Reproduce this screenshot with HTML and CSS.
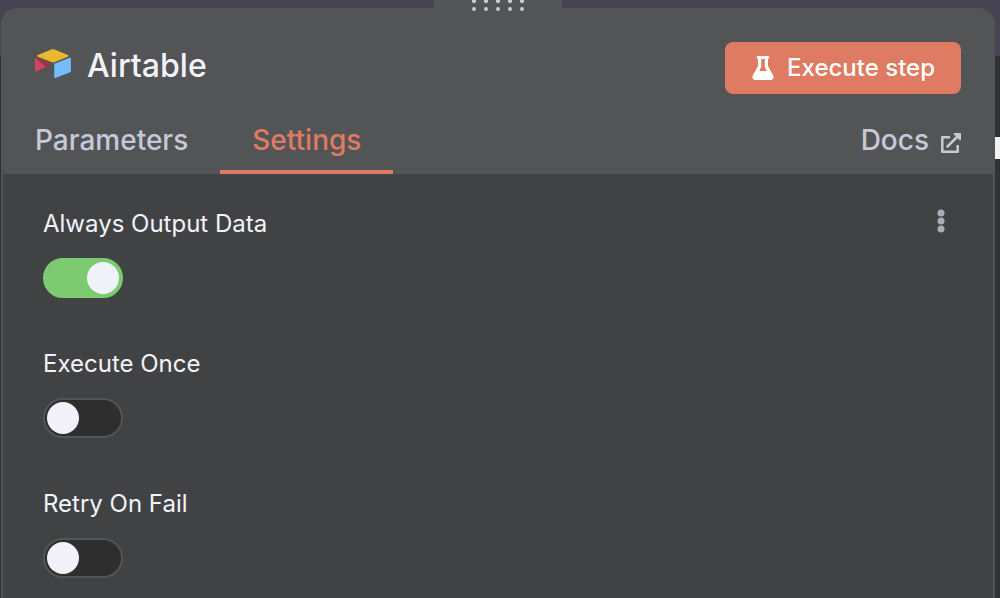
FILE: index.html
```html
<!DOCTYPE html>
<html lang="en">
<head>
    <meta charset="UTF-8">
    <meta name="viewport" content="width=device-width, initial-scale=1.0">
    <title>Airtable</title>
    <link rel="stylesheet" href="styles.css">
</head>
<body>
    <div class="canvas-edge"></div>
    <main class="panel">
        <!-- Drag handle on top of the panel -->
        <div class="drag-handle">
            <svg width="54" height="12" viewBox="0 0 54 12" fill="#c8cad8" aria-hidden="true">
                <path d="M1 0h4v2l-1 1H2L1 2zM13 0h4v2l-1 1h-2l-1-1zM25 0h4v2l-1 1h-2l-1-1zM37 0h4v2l-1 1h-2l-1-1zM49 0h4v2l-1 1h-2l-1-1z"/>
                <circle cx="3" cy="9" r="2"/>
                <circle cx="15" cy="9" r="2"/>
                <circle cx="27" cy="9" r="2"/>
                <circle cx="39" cy="9" r="2"/>
                <circle cx="51" cy="9" r="2"/>
            </svg>
        </div>

        <header class="header">
            <div class="title-row">
                <svg class="logo" width="36" height="30" viewBox="0 0 36 30" aria-hidden="true">
                    <path fill="#e9b82f" d="M16.2.6 2.8 6.1c-.8.3-.8 1.3 0 1.6l13.5 5.3c1.1.5 2.4.5 3.6 0l13-5.3c.8-.3.8-1.3 0-1.6L19.7.6c-1.1-.5-2.4-.5-3.5 0z"/>
                    <path fill="#74bcfb" d="M19.2 15.3v12.8c0 .7.6 1.1 1.2.8l14.9-5.7c.4-.2.6-.5.6-.8V9.5c0-.6-.6-1-1.2-.8l-14.9 5.8c-.4.1-.6.4-.6.8z"/>
                    <path fill="#d04461" d="m15.7 15.7-4.9 2.4L1.3 22.600c-.6.3-1.3-.1-1.3-.8V9.600c0-.3.1-.5.3-.6.3-.3.7-.3 1.1-.2l14.2 5.7c.7.3.8.9.1 1.2z"/>
                    <path fill="#9c3245" d="m15.7 15.7-4.9 2.4L.3 9c.3-.3.7-.3 1.1-.2l14.2 5.7c.7.3.8.9.1 1.2z"/>
                </svg>
                <h1>Airtable</h1>
                <button type="button" class="execute">
                    <svg width="24" height="24" viewBox="0 0 24 24" fill="none" aria-hidden="true">
                        <path fill="#fff" fill-rule="evenodd" d="M7 0h10c1.600 0 1.600 3 0 3v7l5.200 9.400C23.300 21.500 22 24 19.600 24H4.400C2 24 .7 21.500 1.800 19.400L7 10V3c-1.600 0-1.600-3 0-3zM10.200 3v8L8.200 15h7.600l-2-4V3z"/>
                    </svg>
                    <span>Execute step</span>
                </button>
            </div>

            <nav class="tabs">
                <a href="#parameters" class="tab">Parameters</a>
                <a href="#settings" class="tab active">Settings</a>
                <a href="#docs" class="tab docs">
                    Docs
                    <svg width="20" height="20" viewBox="0 0 20 20" fill="none" stroke="#c5c9d8" aria-hidden="true">
                        <path stroke-width="2.5" stroke-linejoin="round" d="M9 4.2H1.3v14.500h15.400V12"/>
                        <path stroke-width="2.5" stroke-linecap="round" d="M6.5 13.500 16 4"/>
                        <path fill="#c5c9d8" stroke="none" d="M13 0h6.500c.3 0 .5.2.5.5V7l-1 .5L12.500 1z"/>
                    </svg>
                </a>
            </nav>
        </header>

        <form class="settings">
            <button type="button" class="more" aria-label="More options">
                <svg width="8" height="24" viewBox="0 0 8 24" fill="#aaadb9" aria-hidden="true">
                    <circle cx="4" cy="4" r="3.5"/>
                    <circle cx="4" cy="12" r="3.5"/>
                    <circle cx="4" cy="20" r="3.5"/>
                </svg>
            </button>
            <div class="field">
                <label for="always-output">Always Output Data</label>
                <input type="checkbox" class="switch" id="always-output" checked>
            </div>
            <div class="field">
                <label for="execute-once">Execute Once</label>
                <input type="checkbox" class="switch" id="execute-once">
            </div>
            <div class="field">
                <label for="retry">Retry On Fail</label>
                <input type="checkbox" class="switch" id="retry">
            </div>
        </form>
    </main>
</body>
</html>
```
FILE: styles.css
```css
* {
    box-sizing: border-box;
}
html {
    height: 100%;
}
body {
    display: flex;
    min-height: 100%;
    margin: 0;
    padding: 8px 5px 0 1px;
    background: linear-gradient(#464452 56px, #303133 56px);
    color: #f2f3fa;
    font-family: Inter, "Liberation Sans", sans-serif;
    font-size: 24px;
}
.canvas-edge {
    position: absolute;
    top: 137px;
    right: 0;
    width: 5px;
    height: 22px;
    background-color: #f3f3f3;
}
.panel {
    position: relative;
    flex: 1;
    background-color: #414244;
    border: 2px solid #535456;
    border-width: 0 2px;
    border-radius: 16px 16px 0 0;
}
.drag-handle {
    position: absolute;
    top: -8px;
    left: 50%;
    display: flex;
    justify-content: center;
    width: 128px;
    height: 16px;
    margin-left: -64px;
    background-color: #535456;
}
.header {
    padding: 34px 32px 0;
    background-color: #535456;
    border-radius: 14px 14px 0 0;
}
.title-row {
    display: flex;
    align-items: center;
}
.logo {
    margin: 0 16px 8px 0;
}
h1 {
    flex: 1;
    margin: 0 0 4px;
    font-size: 32px;
    font-weight: 500;
    line-height: 40px;
}
button {
    font: inherit;
    cursor: pointer;
}
.execute {
    display: flex;
    align-items: center;
    gap: 12px;
    height: 52px;
    padding: 0 26px;
    border: none;
    border-radius: 8px;
    background-color: #de7b62;
    color: white;
    font-weight: 500;
}
.execute span {
    padding-bottom: 2px;
}
.tabs {
    display: flex;
    margin-top: 28px;
}
.tab {
    height: 52px;
    color: #c5c9d8;
    font-size: 28px;
    font-weight: 500;
    line-height: 36px;
    text-decoration: none;
}
.tab.active {
    margin-left: 32px;
    padding: 0 32px;
    border-bottom: 4px solid #de7b62;
    color: #de7b62;
}
.docs {
    display: flex;
    gap: 12px;
    margin-left: auto;
}
.docs svg {
    margin-top: 11px;
}
.settings {
    position: relative;
    display: flex;
    flex-direction: column;
    gap: 48px;
    padding: 32px 40px 16px;
}
.more {
    position: absolute;
    top: 35px;
    right: 48px;
    display: flex;
    padding: 0;
    border: none;
    background: none;
}
.field {
    display: flex;
    flex-direction: column;
    align-items: flex-start;
    gap: 16px;
}
.field label {
    line-height: 36px;
}
.switch {
    appearance: none;
    width: 80px;
    height: 40px;
    margin: 0;
    padding: 2px;
    border: 2px solid #535456;
    border-radius: 20px;
    background-color: #2e2e2e;
    cursor: pointer;
}
.switch::before {
    content: "";
    display: block;
    width: 32px;
    height: 32px;
    border-radius: 50%;
    background-color: #f2f3fa;
}
.switch:checked {
    border-color: #7dcb70;
    background-color: #7dcb70;
}
.switch:checked::before {
    margin-left: auto;
}
```
